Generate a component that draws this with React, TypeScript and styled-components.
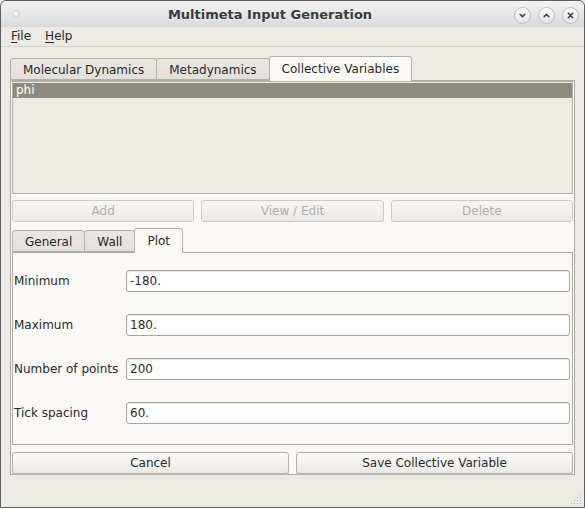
import React from "react";
import styled, { createGlobalStyle } from "styled-components";

const Global = createGlobalStyle`
  html, body { margin: 0; padding: 0; background: #edeae6; }
  body {
    font-family: "DejaVu Sans", "Liberation Sans", sans-serif;
    font-size: 12px;
    color: #2e2e2e;
  }
  * { box-sizing: border-box; }
`;

const Window = styled.div`
  position: relative;
  width: 585px;
  height: 508px;
  border: 1px solid #5e5e5e;
  border-radius: 6px 6px 0 0;
  background: #edeae6;
  display: flex;
  flex-direction: column;
  overflow: hidden;
`;

const TitleBar = styled.div`
  height: 26px;
  flex: none;
  display: grid;
  grid-template-columns: 19px 1fr auto;
  align-items: center;
  background: linear-gradient(#f3f3f3, #dadada);
  border-radius: 5px 5px 0 0;
`;

const Dot = styled.div`
  width: 8px;
  height: 8px;
  margin-left: 11px;
  border-radius: 50%;
  background: radial-gradient(circle at 40% 35%, #ffffff, #d6d6d6);
  border: 1px solid #cfcfcf;
`;

const Title = styled.div`
  text-align: center;
  font-weight: bold;
  font-size: 13px;
  color: #3b3b3b;
  padding-left: 6px;
  text-shadow: 0 1px 0 rgba(255, 255, 255, 0.6);
`;

const Controls = styled.div`
  display: flex;
  gap: 7px;
  padding-right: 5px;
  padding-top: 2px;
`;

const CircleButton = styled.div`
  width: 17px;
  height: 17px;
  border-radius: 50%;
  border: 1px solid #bdbdbd;
  background: linear-gradient(#fbfbfb, #e4e4e4);
  display: flex;
  align-items: center;
  justify-content: center;
`;

const MenuBar = styled.div`
  height: 20px;
  flex: none;
  display: flex;
  align-items: center;
  padding-left: 3px;
  border-bottom: 1px solid #d6d2cd;
`;

const MenuItem = styled.div`
  padding: 0 7px;
  line-height: 19px;
  color: #2a2a2a;
  u { text-underline-offset: 2px; }
`;

const Body = styled.div`
  flex: 1;
  padding: 9px 9px 0 9px;
`;

const TabBar = styled.div`
  display: flex;
  align-items: flex-end;
  height: 24px;
`;

const Tab = styled.div<{ $active?: boolean }>`
  position: relative;
  height: ${(p) => (p.$active ? "25px" : "22px")};
  margin-bottom: ${(p) => (p.$active ? "-1px" : "0")};
  margin-left: -1px;
  &:first-child { margin-left: 0; }
  padding: 0 12px;
  display: flex;
  align-items: center;
  justify-content: center;
  padding-top: ${(p) => (p.$active ? "0" : "1px")};
  border: 1px solid #b3afaa;
  border-bottom: ${(p) => (p.$active ? "none" : "1px solid #b3afaa")};
  border-radius: 3px 3px 0 0;
  background: ${(p) => (p.$active ? "#fbf9f6" : "linear-gradient(#ebe8e4, #e3e0dc)")};
  color: #2a2a2a;
  z-index: ${(p) => (p.$active ? 2 : 1)};
  white-space: nowrap;
`;

const Pane = styled.div`
  border: 1px solid #afaba6;
  background: #fbf9f6;
  padding: 0 1px;
  display: flex;
  flex-direction: column;
`;

const List = styled.div`
  height: 113px;
  border: 1px solid #b4b0ab;
  background: #eeebe7;
  padding: 1px 0 0 0;
`;

const ListRow = styled.div<{ $selected?: boolean }>`
  height: 15px;
  line-height: 15px;
  padding-left: 3px;
  background: ${(p) => (p.$selected ? "#8f8b7c" : "transparent")};
  color: ${(p) => (p.$selected ? "#ffffff" : "#2e2e2e")};
`;

const ButtonRow = styled.div<{ $cols: number; $top: number }>`
  display: grid;
  grid-template-columns: repeat(${(p) => p.$cols}, 1fr);
  gap: 7px;
  margin-top: ${(p) => p.$top}px;
`;

const Button = styled.div<{ $disabled?: boolean }>`
  height: 22px;
  display: flex;
  align-items: center;
  justify-content: center;
  border: 1px solid ${(p) => (p.$disabled ? "#ccc8c3" : "#b3afaa")};
  border-radius: 3px;
  background: ${(p) =>
    p.$disabled ? "linear-gradient(#f7f5f3, #ece9e5)" : "linear-gradient(#fdfcfb, #ebe8e4)"};
  box-shadow: ${(p) => (p.$disabled ? "none" : "0 1px 0 #b9b5b0")};
  color: ${(p) => (p.$disabled ? "#b2aeaa" : "#2a2a2a")};
`;

const InnerTabs = styled.div`
  margin-top: 6px;
`;

const InnerPane = styled.div`
  border: 1px solid #afaba6;
  background: #fbf9f6;
  padding: 17px 2px 20px 1px;
  display: grid;
  grid-template-columns: 112px 1fr;
  row-gap: 22px;
  align-items: center;
`;

const Label = styled.div`
  color: #2a2a2a;
  white-space: nowrap;
`;

const Field = styled.input`
  height: 22px;
  width: 100%;
  border: 1px solid #a7a39e;
  border-radius: 3px;
  background: #ffffff;
  padding: 0 3px;
  font-family: inherit;
  font-size: 12px;
  color: #2a2a2a;
  box-shadow: inset 0 1px 0 #e6e3df;
  outline: none;
`;

const Grip = styled.svg`
  position: absolute;
  right: 2px;
  bottom: 2px;
`;

const rows: [string, string][] = [
  ["Minimum", "-180."],
  ["Maximum", "180."],
  ["Number of points", "200"],
  ["Tick spacing", "60."],
];

const Chevron = ({ d }: { d: string }) => (
  <svg width="9" height="9" viewBox="0 0 9 9">
    <path d={d} fill="none" stroke="#4a4a4a" strokeWidth="1.6" strokeLinecap="round" strokeLinejoin="round" />
  </svg>
);

export default function App() {
  return (
    <>
      <Global />
      <Window>
        <TitleBar>
          <Dot />
          <Title>Multimeta Input Generation</Title>
          <Controls>
            <CircleButton>
              <Chevron d="M2.2 3.4 L4.5 5.7 L6.8 3.4" />
            </CircleButton>
            <CircleButton>
              <Chevron d="M2.2 5.6 L4.5 3.3 L6.8 5.6" />
            </CircleButton>
            <CircleButton>
              <Chevron d="M2.4 2.4 L6.6 6.6 M6.6 2.4 L2.4 6.6" />
            </CircleButton>
          </Controls>
        </TitleBar>
        <MenuBar>
          <MenuItem>
            <u>F</u>ile
          </MenuItem>
          <MenuItem>
            <u>H</u>elp
          </MenuItem>
        </MenuBar>
        <Body>
          <TabBar>
            <Tab>Molecular Dynamics</Tab>
            <Tab>Metadynamics</Tab>
            <Tab $active>Collective Variables</Tab>
          </TabBar>
          <Pane>
            <List>
              <ListRow $selected>phi</ListRow>
            </List>
            <ButtonRow $cols={3} $top={6}>
              <Button $disabled>Add</Button>
              <Button $disabled>View / Edit</Button>
              <Button $disabled>Delete</Button>
            </ButtonRow>
            <InnerTabs>
              <TabBar>
                <Tab>General</Tab>
                <Tab>Wall</Tab>
                <Tab $active>Plot</Tab>
              </TabBar>
              <InnerPane>
                {rows.map(([label, value]) => (
                  <React.Fragment key={label}>
                    <Label>{label}</Label>
                    <Field readOnly value={value} />
                  </React.Fragment>
                ))}
              </InnerPane>
            </InnerTabs>
            <ButtonRow $cols={2} $top={7}>
              <Button>Cancel</Button>
              <Button>Save Collective Variable</Button>
            </ButtonRow>
          </Pane>
        </Body>
        <Grip width="14" height="14" viewBox="0 0 14 14">
          {[
            [12, 3],
            [12, 6],
            [9, 6],
            [12, 9],
            [9, 9],
            [6, 9],
            [12, 12],
            [9, 12],
            [6, 12],
            [3, 12],
          ].map(([x, y], i) => (
            <rect key={i} x={x} y={y} width="1" height="1" fill="#b8b4af" />
          ))}
        </Grip>
      </Window>
    </>
  );
}
